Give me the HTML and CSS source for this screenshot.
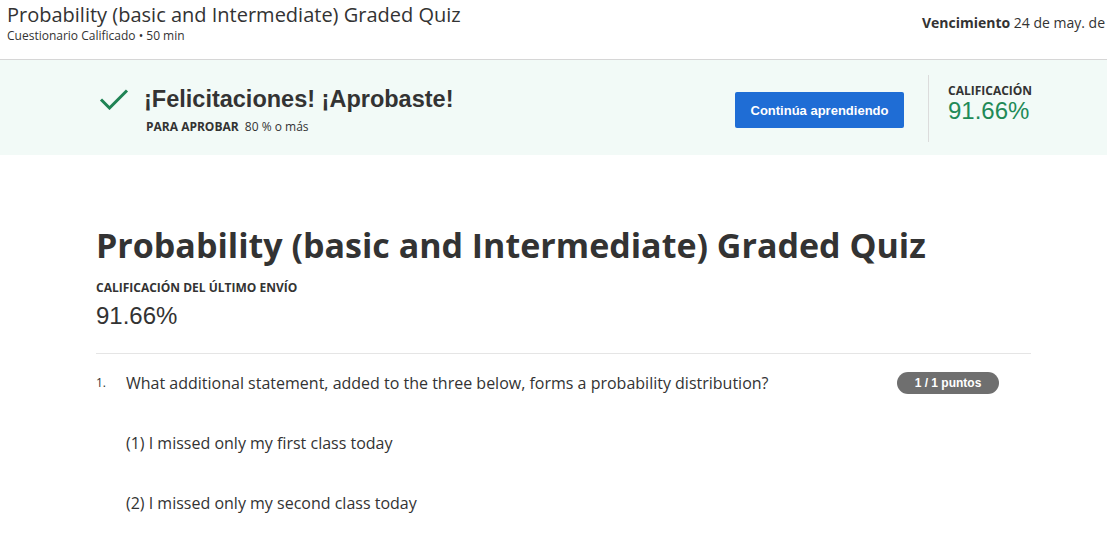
FILE: index.html
```html
<!DOCTYPE html>
<html lang="es">
<head>
<meta charset="utf-8">
<title>Probability (basic and Intermediate) Graded Quiz</title>
<link rel="stylesheet" href="styles.css">
</head>
<body>
<header class="topbar">
  <div class="topbar-left">
    <div class="topbar-title">Probability (basic and Intermediate) Graded Quiz</div>
    <div class="topbar-sub">Cuestionario Calificado • 50 min</div>
  </div>
  <div class="topbar-right"><b>Vencimiento</b> 24 de may. de</div>
</header>
<section class="banner">
  <div class="banner-main">
    <svg class="check" width="30" height="22" viewBox="0 0 30 22"><path d="M2 11.5 L10.5 20 L28 2.5" fill="none" stroke="#1f8354" stroke-width="3"/></svg>
    <div class="banner-text">
      <div class="banner-title">¡Felicitaciones! ¡Aprobaste!</div>
      <div class="banner-pass"><b>PARA APROBAR</b> 80 % o más</div>
    </div>
  </div>
  <button class="btn">Continúa aprendiendo</button>
  <div class="banner-grade">
    <div class="label">CALIFICACIÓN</div>
    <div class="grade-value">91.66%</div>
  </div>
</section>
<main class="content">
  <h1 class="quiz-title">Probability (basic and Intermediate) Graded Quiz</h1>
  <div class="last-label">CALIFICACIÓN DEL ÚLTIMO ENVÍO</div>
  <div class="last-value">91.66%</div>
  <hr class="sep">
  <div class="question">
    <div class="qnum">1.</div>
    <div class="qbody">
      <div class="qhead">
        <div class="qtext">What additional statement, added to the three below, forms a probability distribution?</div>
        <span class="badge">1 / 1 puntos</span>
      </div>
      <p class="stmt">(1) I missed only my first class today</p>
      <p class="stmt">(2) I missed only my second class today</p>
    </div>
  </div>
</main>
</body>
</html>
```

FILE: styles.css
```css
html, body {
  margin: 0;
  padding: 0;
  background: #fff;
  overflow: hidden;
  font-family: "Open Sans", "Liberation Sans", sans-serif;
  color: #333;
}
.topbar {
  height: 59px;
  border-bottom: 1px solid #d6d6d6;
  display: flex;
  justify-content: space-between;
  align-items: flex-start;
  white-space: nowrap;
  overflow: hidden;
}
.topbar-left {
  padding-left: 7px;
}
.topbar-title {
  font-size: 20px;
  line-height: 30px;
  color: #333;
}
.topbar-sub {
  font-size: 12px;
  line-height: 12px;
  color: #333;
}
.topbar-right {
  font-size: 14px;
  line-height: 20px;
  padding-top: 13px;
  padding-right: 2px;
  color: #333;
}
.topbar-right b { font-weight: 700; }
.banner {
  height: 95px;
  background: #f2faf7;
  display: flex;
  align-items: center;
}
.banner-main {
  display: flex;
  align-items: flex-start;
  padding-left: 99px;
  width: 735px;
  box-sizing: border-box;
  margin-top: 4px;
}
.check { margin-top: 4px; margin-right: 15px; }
.banner-title {
  font-family: "Liberation Sans", Arial, sans-serif;
  font-weight: 700;
  font-size: 23.5px;
  line-height: 30px;
  color: #333;
}
.banner-pass {
  font-size: 12px;
  line-height: 16px;
  margin-top: 5px;
  padding-left: 2px;
}
.banner-pass b { margin-right: 3px; }
.btn {
  font-family: "Liberation Sans", Arial, sans-serif;
  font-weight: 700;
  font-size: 13px;
  color: #fff;
  background: #1f6dd5;
  border: none;
  border-radius: 2px;
  width: 169px;
  height: 36px;
  padding: 0;
  margin-top: 5px;
  flex-shrink: 0;
}
.banner-grade {
  margin-left: 24px;
  border-left: 1px solid #dcdcdc;
  height: 67px;
  padding-left: 19px;
  margin-top: 1px;
}
.label {
  font-size: 12px;
  font-weight: 700;
  line-height: 16px;
  margin-top: 8px;
  color: #333;
}
.grade-value {
  font-family: "Liberation Sans", Arial, sans-serif;
  font-size: 24px;
  line-height: 28px;
  margin-top: -2px;
  color: #1f8a57;
}
.content {
  padding: 67px 76px 0 96px;
}
.quiz-title {
  font-size: 34px;
  font-weight: 700;
  line-height: 46px;
  margin: 0;
  color: #333;
}
.last-label {
  font-size: 12px;
  font-weight: 700;
  margin-top: 12px;
  line-height: 16px;
}
.last-value {
  font-family: "Liberation Sans", Arial, sans-serif;
  font-size: 24px;
  line-height: 30px;
  margin-top: 5px;
}
.sep {
  border: none;
  border-top: 1px solid #e5e5e5;
  margin: 22px 0 0 0;
}
.question {
  display: flex;
  margin-top: 17px;
}
.qnum {
  width: 30px;
  font-size: 12px;
  line-height: 24px;
}
.qbody { flex: 1; }
.qhead {
  display: flex;
  justify-content: space-between;
  align-items: flex-start;
}
.qtext {
  font-size: 16px;
  line-height: 24px;
}
.badge {
  font-family: "Liberation Sans", Arial, sans-serif;
  font-weight: 700;
  font-size: 12px;
  color: #fff;
  background: #6f6f6f;
  border-radius: 11px;
  width: 102px;
  height: 22px;
  line-height: 22px;
  text-align: center;
  margin-right: 32px;
  margin-top: 1px;
  flex-shrink: 0;
}
.stmt {
  font-size: 16px;
  line-height: 24px;
  margin: 36px 0 0 0;
}
```
